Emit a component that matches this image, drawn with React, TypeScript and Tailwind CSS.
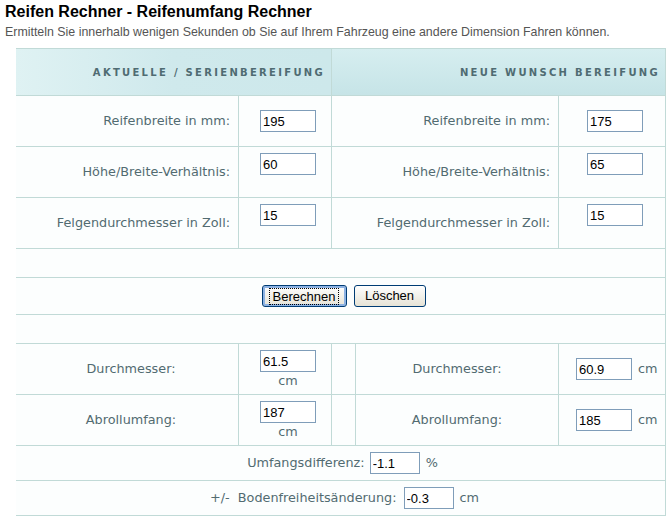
import React from 'react';

const line = 'border-[#c1dad7]';

const Field = ({ value, width = 'w-[56px]' }: { value: string; width?: string }) => (
  <input
    readOnly
    value={value}
    className={`${width} h-[22px] border border-[#7f9db9] bg-white px-[2px] text-[13px] text-black font-['Liberation_Sans',Arial,sans-serif] outline-none`}
  />
);

interface ITopRowProps {
  left: string;
  leftValue: string;
  right: string;
  rightValue: string;
  alignTop?: boolean;
}

const TopRow = ({ left, leftValue, right, rightValue, alignTop = false }: ITopRowProps) => {
  const inputCell = alignTop ? 'items-start pt-[6px]' : 'items-center';

  return (
    <div className={`flex h-[51px] border-b ${line} bg-[#fcfefe]`}>
      <div className={`flex w-[223px] items-center justify-end border-r ${line} pr-[8px]`}>{left}</div>
      <div className={`flex w-[93px] border-r ${line} pl-[21px] ${inputCell}`}>
        <Field value={leftValue} />
      </div>
      <div className={`flex w-[227px] items-center justify-end border-r ${line} pr-[8px]`}>{right}</div>
      <div className={`flex flex-1 border-r ${line} pl-[28px] ${inputCell}`}>
        <Field value={rightValue} />
      </div>
    </div>
  );
};

const ResultRow = ({ label, leftValue, rightValue }: { label: string; leftValue: string; rightValue: string }) => (
  <div className={`flex h-[51px] border-b ${line} bg-[#fcfefe]`}>
    <div className={`flex w-[223px] items-center justify-center border-r ${line} pl-[8px]`}>{label}</div>
    <div className={`flex w-[93px] flex-col items-center border-r ${line} pl-[6px] pt-[6px]`}>
      <Field value={leftValue} />
      <span className="leading-[18px]">cm</span>
    </div>
    <div className={`w-[24px] border-r ${line}`} />
    <div className={`flex w-[203px] items-center justify-center border-r ${line}`}>{label}</div>
    <div className={`flex flex-1 items-center gap-[6px] border-r ${line} pl-[17px]`}>
      <Field value={rightValue} />
      <span>cm</span>
    </div>
  </div>
);

const XpButton = ({ children, focused = false }: { children: React.ReactNode; focused?: boolean }) => (
  <button
    type="button"
    className={`flex h-[22px] items-center justify-center rounded-[3px] border border-[#003c74] bg-gradient-to-b from-white to-[#e6e3d6] text-[13px] text-black font-['Liberation_Sans',Arial,sans-serif] ${
      focused ? 'w-[85px] shadow-[inset_0_0_0_2px_#8db2e3]' : 'w-[72px]'
    }`}
  >
    {focused ? (
      <span className="border border-dotted border-black px-[3px] leading-[15px]">{children}</span>
    ) : (
      children
    )}
  </button>
);

export default function App() {
  return (
    <div className="h-[518px] w-[666px] overflow-hidden bg-white font-['Liberation_Sans',Arial,sans-serif]">
      <h1 className="mt-[1px] pl-[5px] text-[16px] font-bold leading-[22px] text-black">
        Reifen Rechner - Reifenumfang Rechner
      </h1>
      <p className="mt-[1px] pl-[5px] text-[12.4px] leading-[16px] text-[#555]">
        Ermitteln Sie innerhalb wenigen Sekunden ob Sie auf Ihrem Fahrzeug eine andere Dimension Fahren können.
      </p>

      <div className="ml-[16px] mt-[8px] w-[650px] text-[12.8px] text-[#526b71] font-['DejaVu_Sans',Verdana,sans-serif]">
        {/* header */}
        <div className={`flex h-[48px] border-y ${line} bg-gradient-to-b from-[#d6eef0] to-[#c6e4e7] text-[10px] font-bold uppercase tracking-[2.3px] text-[#4f6b72]`}>
          <div className={`flex w-[316px] items-center justify-end border-r ${line} bg-gradient-to-r from-[#dff2f3] via-[#cfe9ec] to-[#cde8eb] pr-[6px]`}>
            Aktuelle / Serienbereifung
          </div>
          <div className={`flex flex-1 items-center justify-end border-r ${line} pr-[5px]`}>Neue Wunsch Bereifung</div>
        </div>

        <TopRow left="Reifenbreite in mm:" leftValue="195" right="Reifenbreite in mm:" rightValue="175" />
        <TopRow
          left="Höhe/Breite-Verhältnis:"
          leftValue="60"
          right="Höhe/Breite-Verhältnis:"
          rightValue="65"
          alignTop
        />
        <TopRow
          left="Felgendurchmesser in Zoll:"
          leftValue="15"
          right="Felgendurchmesser in Zoll:"
          rightValue="15"
          alignTop
        />

        <div className={`h-[29px] border-b border-r ${line} bg-[#fcfefe]`} />
        <div className={`flex h-[37px] items-center justify-center gap-[7px] border-b border-r ${line} bg-[#fcfefe] pl-[6px]`}>
          <XpButton focused>Berechnen</XpButton>
          <XpButton>Löschen</XpButton>
        </div>
        <div className={`h-[29px] border-b border-r ${line} bg-[#fcfefe]`} />

        <ResultRow label="Durchmesser:" leftValue="61.5" rightValue="60.9" />
        <ResultRow label="Abrollumfang:" leftValue="187" rightValue="185" />

        <div className={`flex h-[35px] items-center justify-center border-b border-r ${line} bg-[#fcfefe] pl-[4px]`}>
          <span>Umfangsdifferenz:</span>
          <span className="ml-[5px]">
            <Field value="-1.1" width="w-[50px]" />
          </span>
          <span className="ml-[6px]">%</span>
        </div>
        <div className={`flex h-[35px] items-center justify-center border-b border-r ${line} bg-[#fcfefe] pl-[8px]`}>
          <span>+/-{'\u00a0'} Bodenfreiheitsänderung:</span>
          <span className="ml-[7px]">
            <Field value="-0.3" width="w-[50px]" />
          </span>
          <span className="ml-[6px]">cm</span>
        </div>
      </div>
    </div>
  );
}
